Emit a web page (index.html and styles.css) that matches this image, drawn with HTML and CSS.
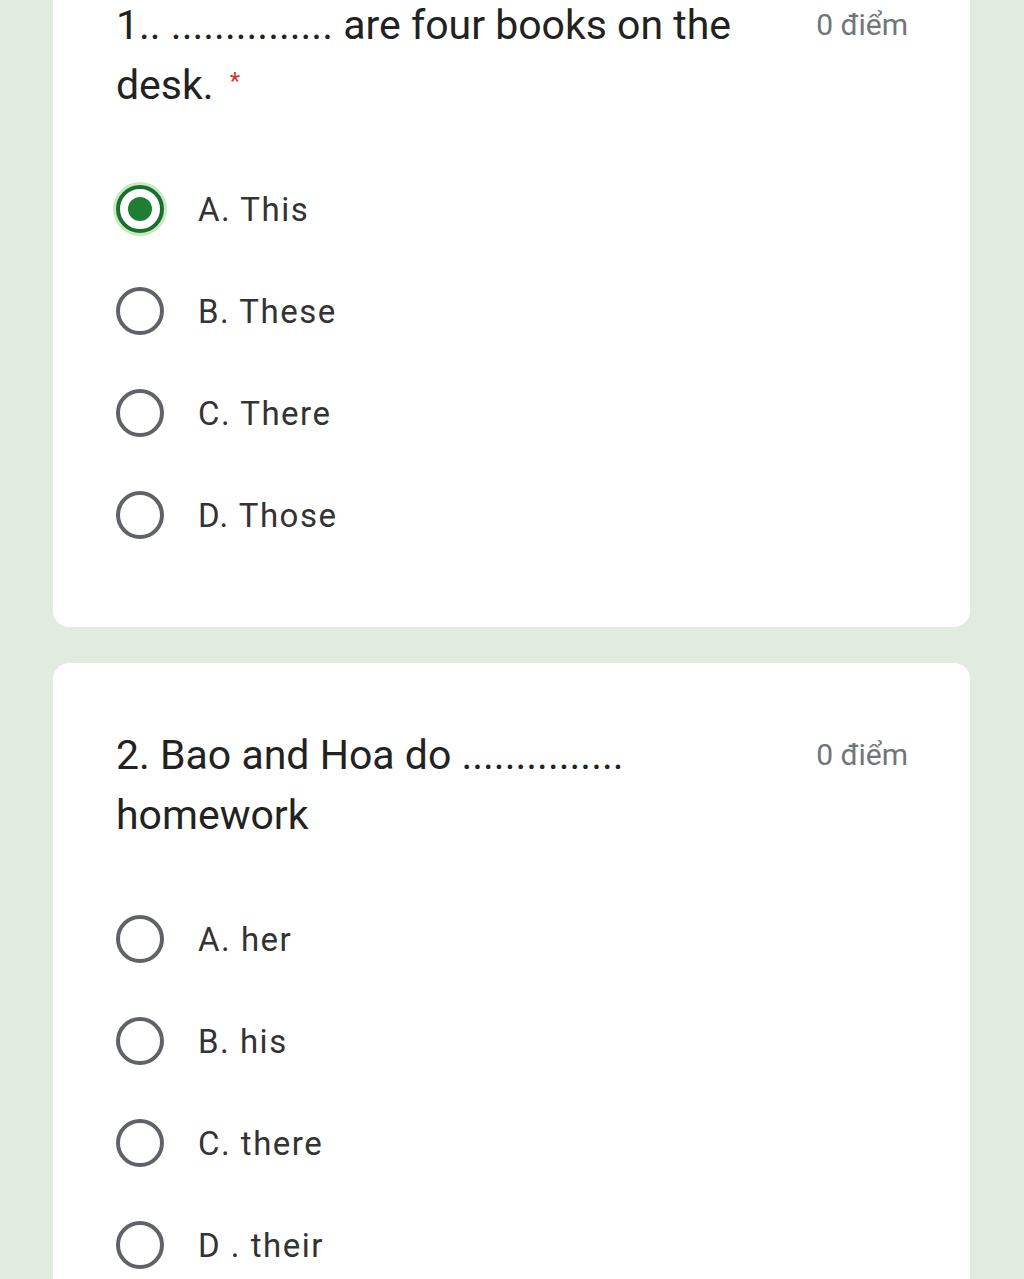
FILE: index.html
```html
<!DOCTYPE html>
<html lang="vi">
<head>
<meta charset="utf-8">
<title>Quiz</title>
<link rel="stylesheet" href="styles.css">
</head>
<body>
<main class="form">
  <section class="card card-first">
    <div class="q-head">
      <div class="q-title">1.. ............... are four books on the desk.<span class="req">*</span></div>
      <div class="q-points">0 điểm</div>
    </div>
    <div class="options">
      <label class="opt"><span class="radio radio-on"><span class="dot"></span></span><span class="opt-text">A. This</span></label>
      <label class="opt"><span class="radio"></span><span class="opt-text">B. These</span></label>
      <label class="opt"><span class="radio"></span><span class="opt-text">C. There</span></label>
      <label class="opt"><span class="radio"></span><span class="opt-text">D. Those</span></label>
    </div>
  </section>
  <section class="card">
    <div class="q-head">
      <div class="q-title">2. Bao and Hoa do ............... homework</div>
      <div class="q-points">0 điểm</div>
    </div>
    <div class="options">
      <label class="opt"><span class="radio"></span><span class="opt-text">A. her</span></label>
      <label class="opt"><span class="radio"></span><span class="opt-text">B. his</span></label>
      <label class="opt"><span class="radio"></span><span class="opt-text">C. there</span></label>
      <label class="opt"><span class="radio"></span><span class="opt-text">D . their</span></label>
    </div>
  </section>
</main>
</body>
</html>
```

FILE: styles.css
```css
html, body {
  margin: 0;
  padding: 0;
  background: #e1ebe0;
}
body {
  font-family: Roboto, "Liberation Sans", sans-serif;
  color: #202124;
  overflow: hidden;
  height: 1279px;
}
.form {
  display: flex;
  flex-direction: column;
  gap: 36px;
  padding: 0 54px 0 53px;
}
.card {
  background: #ffffff;
  border-radius: 16px;
  padding: 62px 62px 61px 63px;
}
.card-first {
  margin-top: -67px;
}
.q-head {
  display: flex;
  justify-content: space-between;
  align-items: flex-start;
}
.q-title {
  width: 660px;
  font-size: 41px;
  line-height: 60px;
  color: #222;
}
.req {
  color: #d93025;
  font-size: 24px;
  line-height: 0;
  vertical-align: 10px;
  margin-left: 16px;
}
.q-points {
  font-size: 30px;
  line-height: 60px;
  color: #70757a;
}
.options {
  margin-top: 43px;
  display: flex;
  flex-direction: column;
}
.opt {
  height: 102px;
  display: flex;
  align-items: center;
  gap: 34px;
}
.radio {
  box-sizing: border-box;
  width: 48px;
  height: 48px;
  border: 4px solid #5f6368;
  border-radius: 50%;
  display: flex;
  align-items: center;
  justify-content: center;
  flex: none;
}
.radio-on {
  border-color: #1b6e2d;
  box-shadow: 0 0 0 3px #c6eabc;
}
.dot {
  width: 24px;
  height: 24px;
  border-radius: 50%;
  background: #1e7e34;
}
.opt-text {
  font-size: 33px;
  letter-spacing: 1.5px;
  color: #333;
}
```
